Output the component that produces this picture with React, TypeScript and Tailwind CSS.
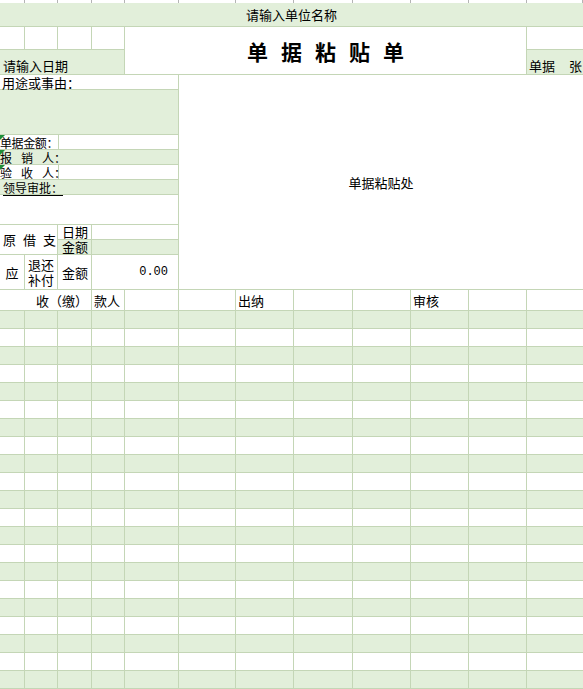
import React from "react";

const line = "border-[#c4d6b6]";
const green = "bg-[#e2efda]";

function Flag() {
    // excel's little green "number stored as text" corner
    return (
        <span className="absolute left-0 top-0 w-0 h-0 border-t-[5px] border-t-[#1e8f3a] border-r-[5px] border-r-transparent" />
    );
}

export default function App() {
    const colCells = Array.from({ length: 12 });
    const bodyRows = Array.from({ length: 21 });

    return (
        <div className="w-[583px] h-[689px] overflow-hidden bg-white text-black text-[13px] leading-[15px] whitespace-nowrap font-['Noto_Sans_CJK_SC','Liberation_Sans',sans-serif]">
            {/* Upper form */}
            <div className="grid grid-cols-[25px_33px_34px_33px_54px_57px_58px_59px_58px_58px_58px_56px] grid-rows-[3px_24px_23px_25px_15px_45px_15px_15px_15px_15px_30px_15px_15px_35px_21px]">
                {/* sliver of the row above */}
                {colCells.map((_, i) => (
                    <div key={i} className="row-start-1 border-r border-[#b4b4b4]" />
                ))}

                {/* unit name */}
                <div className={`col-start-1 col-span-12 row-start-2 ${green} border-b ${line} flex items-center justify-center`}>
                    请输入单位名称
                </div>

                {/* row 3 small cells */}
                <div className={`col-start-1 row-start-3 border-r border-b ${line}`} />
                <div className={`col-start-2 row-start-3 border-r border-b ${line}`} />
                <div className={`col-start-3 row-start-3 border-r border-b ${line}`} />
                <div className={`col-start-4 row-start-3 border-r border-b ${line}`} />

                {/* title */}
                <div className={`col-start-5 col-span-7 row-start-3 row-span-2 border-r border-b ${line} flex items-center justify-center pl-[13px]`}>
                    <span className="text-[21px] leading-[24px] font-bold tracking-[13px]">单据粘贴单</span>
                </div>

                <div className={`col-start-12 row-start-3 border-b ${line}`} />
                <div className={`col-start-1 col-span-4 row-start-4 ${green} border-r border-b ${line} flex items-end pl-[3px] pb-[1px]`}>
                    请输入日期
                </div>
                <div className={`col-start-12 row-start-4 ${green} border-b ${line} flex items-end pl-[2px] pb-[1px]`}>
                    <span>单据</span>
                    <span className="ml-[14px]">张</span>
                </div>

                {/* left column */}
                <div className={`col-start-1 col-span-5 row-start-5 border-r border-b ${line} pl-[2px]`}>
                    <span className="underline underline-offset-2">用途或事由：</span>
                </div>
                <div className={`col-start-1 col-span-5 row-start-6 ${green} border-r border-b ${line}`} />

                <div className={`col-start-3 col-span-3 row-start-7 border-l border-r border-b ${line}`} />
                <div className={`relative z-10 col-start-1 col-span-2 row-start-7 border-b ${line} text-[12px] tracking-[-0.4px]`}>
                    <Flag />
                    单据金额：
                </div>

                <div className={`col-start-3 col-span-3 row-start-8 ${green} border-r border-b ${line}`} />
                <div className={`relative z-10 col-start-1 col-span-2 row-start-8 ${green} border-b ${line} text-[12px]`}>
                    <Flag />
                    <span className="tracking-[9px]">报销</span>人：
                </div>

                <div className={`col-start-3 col-span-3 row-start-9 border-l border-r border-b ${line}`} />
                <div className={`relative z-10 col-start-1 col-span-2 row-start-9 border-b ${line} text-[12px]`}>
                    <Flag />
                    <span className="tracking-[9px]">验收</span>人：
                </div>

                <div className={`col-start-1 col-span-5 row-start-10 ${green} border-r border-b ${line} pl-[3px] text-[12px]`}>
                    <span className="underline underline-offset-2">领导审批：</span>
                </div>
                <div className={`col-start-1 col-span-5 row-start-11 border-r border-b ${line}`} />

                <div className={`col-start-1 col-span-2 row-start-12 row-span-2 border-r border-b ${line} flex items-center pl-[3px]`}>
                    原<span className="ml-[7px]">借</span><span className="ml-[7px]">支</span>
                </div>
                <div className={`col-start-3 row-start-12 border-r border-b ${line} pl-[4px] leading-[14px]`}>日期</div>
                <div className={`col-start-4 col-span-2 row-start-12 border-r border-b ${line}`} />
                <div className={`col-start-3 row-start-13 ${green} border-r border-b ${line} pl-[4px] leading-[14px]`}>金额</div>
                <div className={`col-start-4 col-span-2 row-start-13 ${green} border-r border-b ${line}`} />

                <div className={`col-start-1 row-start-14 border-r border-b ${line} flex items-center justify-center`}>应</div>
                <div className={`col-start-2 row-start-14 border-r border-b ${line} flex flex-col items-center justify-center leading-[15px]`}>
                    <span>退还</span>
                    <span>补付</span>
                </div>
                <div className={`col-start-3 row-start-14 border-r border-b ${line} flex items-center pl-[4px]`}>金额</div>
                <div className={`col-start-4 col-span-2 row-start-14 border-r border-b ${line} flex items-center justify-end pr-[10px] font-['Liberation_Mono',monospace] text-[12px]`}>
                    0.00
                </div>

                {/* paste area */}
                <div className={`col-start-6 col-span-7 row-start-5 row-span-10 border-b ${line} flex items-center justify-center`}>
                    单据粘贴处
                </div>

                {/* header row */}
                <div className={`col-start-1 col-span-3 row-start-15 border-r border-b ${line} flex items-center justify-end pr-[3px]`}>
                    收（缴）
                </div>
                <div className={`col-start-4 row-start-15 border-r border-b ${line} flex items-center pl-[2px]`}>款人</div>
                <div className={`col-start-5 row-start-15 border-r border-b ${line}`} />
                <div className={`col-start-6 row-start-15 border-r border-b ${line}`} />
                <div className={`col-start-7 row-start-15 border-r border-b ${line} flex items-center pl-[2px]`}>出纳</div>
                <div className={`col-start-8 row-start-15 border-r border-b ${line}`} />
                <div className={`col-start-9 row-start-15 border-r border-b ${line}`} />
                <div className={`col-start-10 row-start-15 border-r border-b ${line} flex items-center pl-[2px]`}>审核</div>
                <div className={`col-start-11 row-start-15 border-r border-b ${line}`} />
                <div className={`col-start-12 row-start-15 border-b ${line}`} />
            </div>

            {/* Empty sheet rows */}
            <div className="grid grid-cols-[25px_33px_34px_33px_54px_57px_58px_59px_58px_58px_58px_56px] auto-rows-[18px]">
                {bodyRows.map((_, r) =>
                    colCells.map((_, c) => (
                        <div
                            key={`${r}-${c}`}
                            className={`border-b ${line} ${c < 11 ? "border-r" : ""} ${r % 2 === 0 ? green : "bg-white"}`}
                        />
                    ))
                )}
            </div>
        </div>
    );
}
